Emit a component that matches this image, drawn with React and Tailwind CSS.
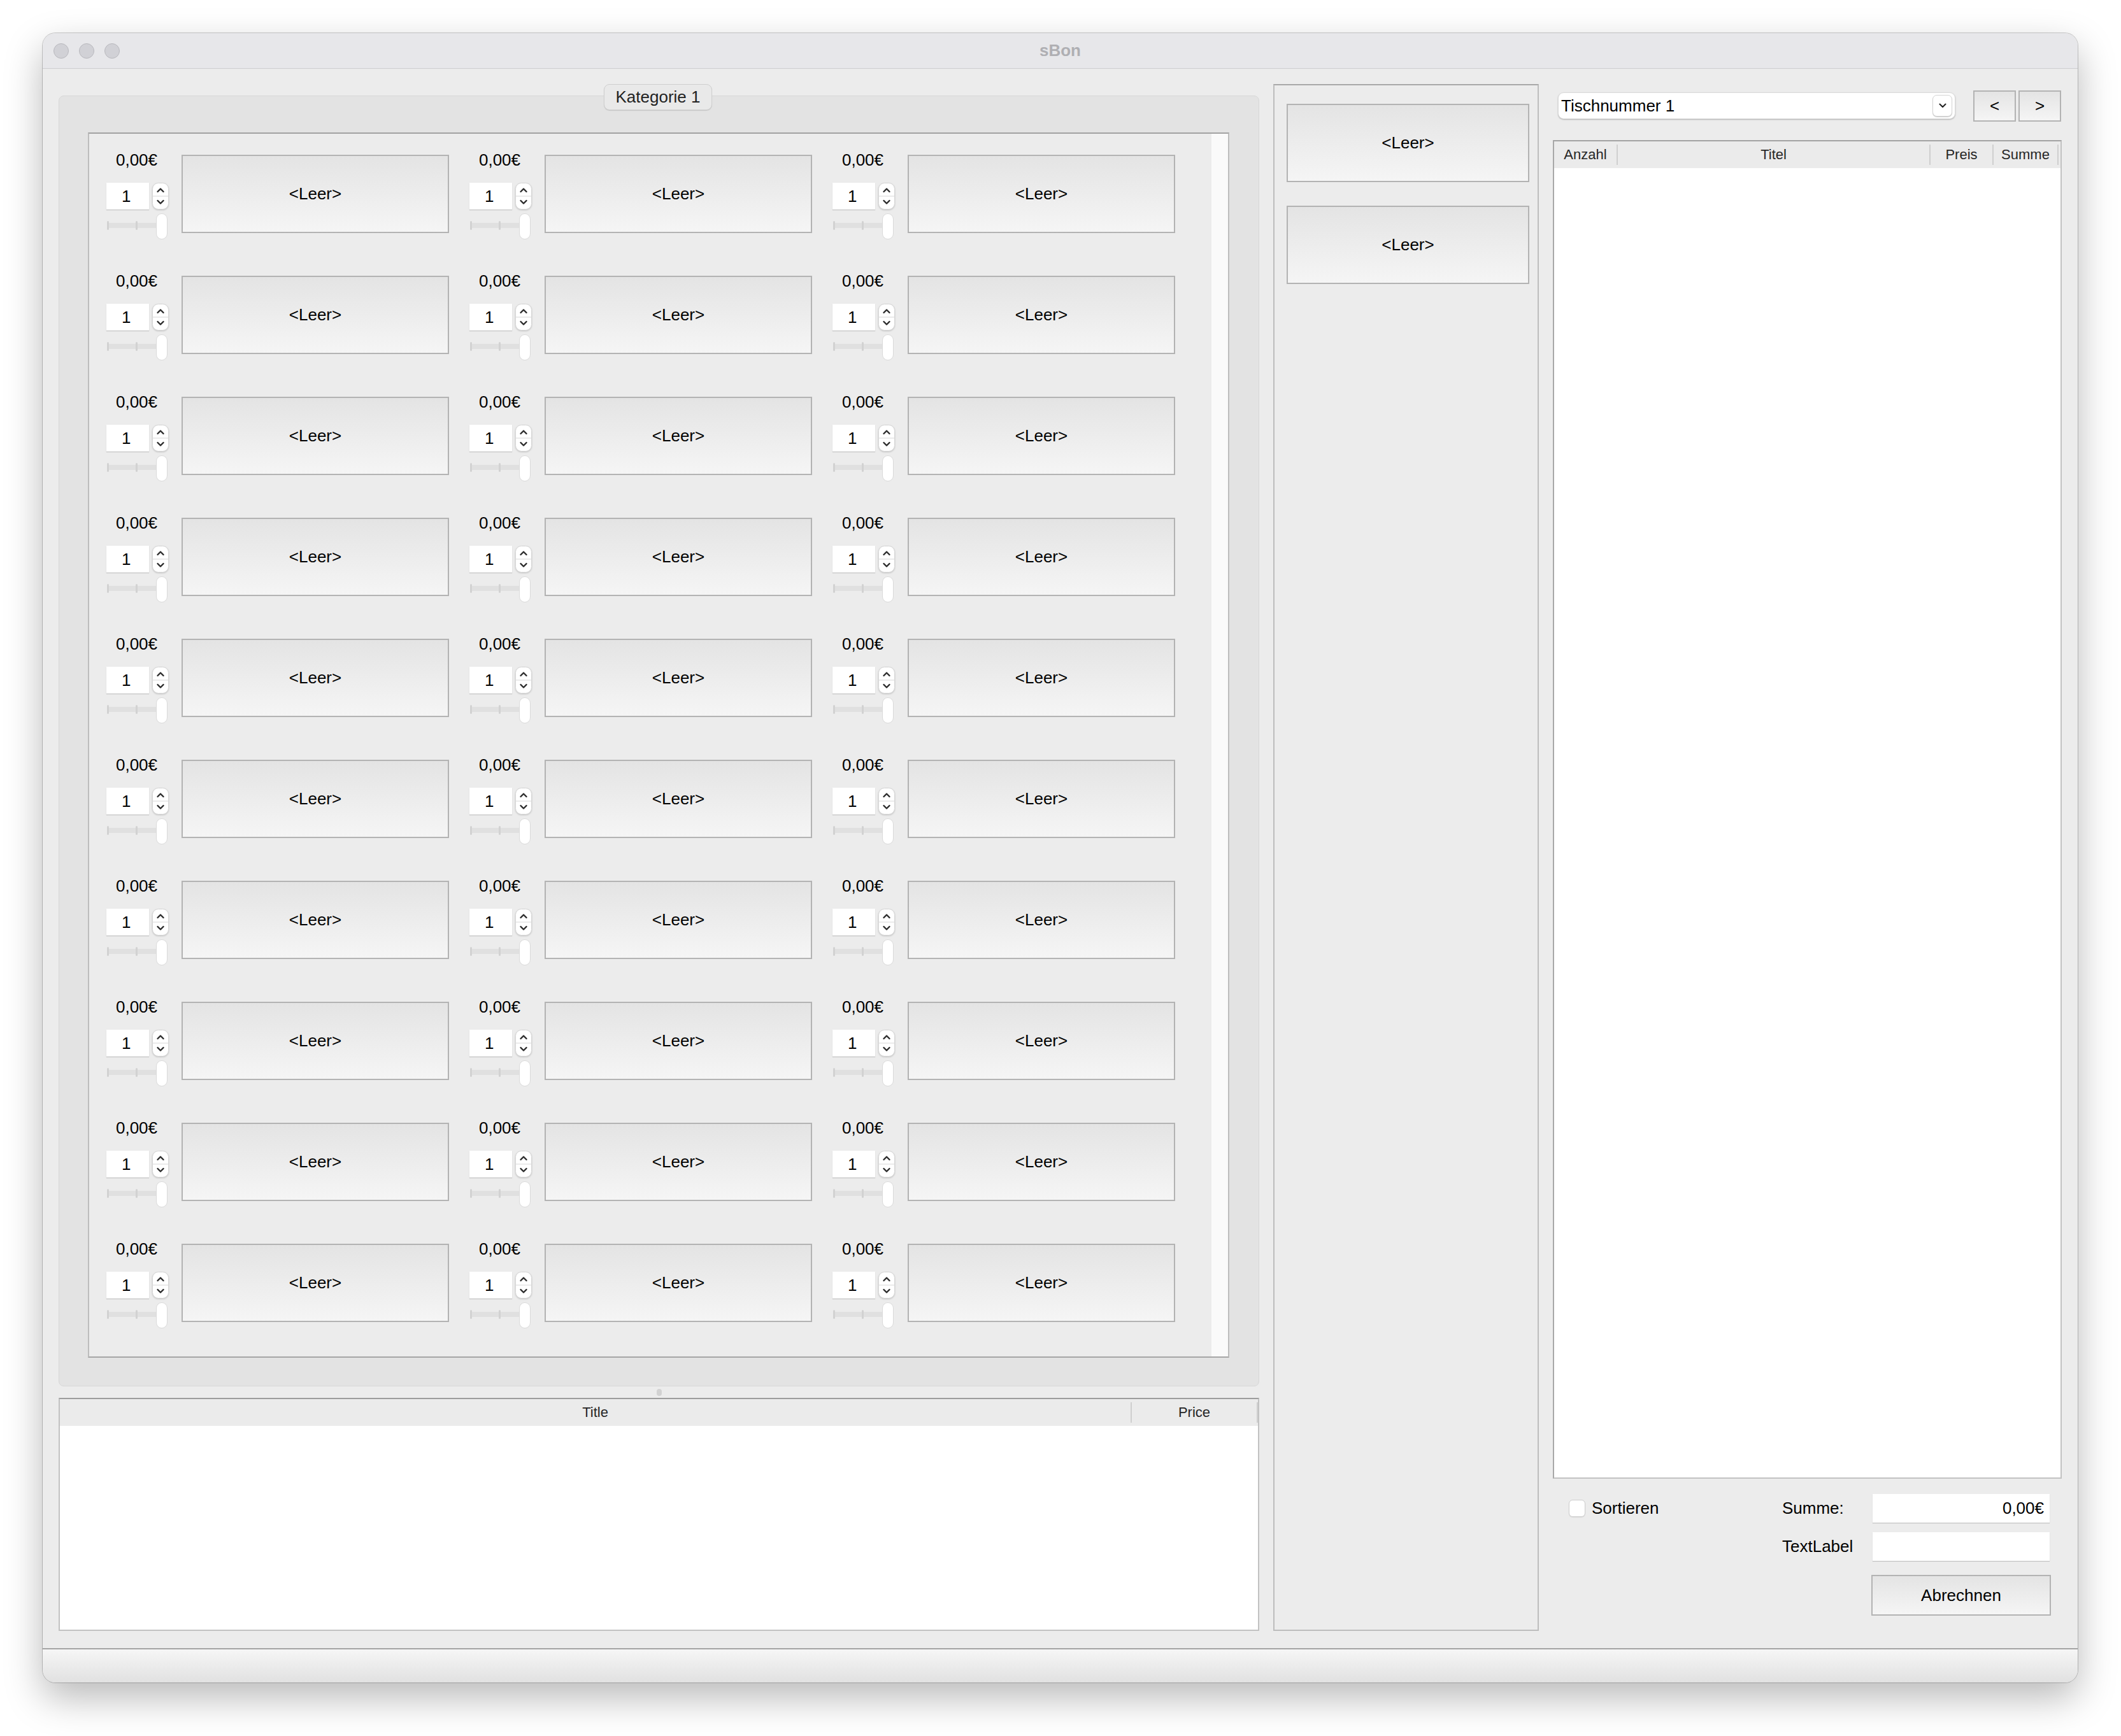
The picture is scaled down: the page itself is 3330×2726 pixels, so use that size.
// sBon main window
const rows = Array.from({ length: 10 })
const cols = Array.from({ length: 3 })

function LeerButton({ className = '', children = '<Leer>' }) {
  return (
    <div className={`flex items-center justify-center border-2 border-[#b3b3b3] bg-linear-to-b from-[#e4e4e4] to-[#f5f5f5] text-[26px] text-black ${className}`}>
      {children}
    </div>
  )
}

function Stepper() {
  return (
    <svg width="26" height="42" viewBox="0 0 26 42" className="drop-shadow-[0_1px_1px_rgba(0,0,0,0.18)]">
      <rect x="0.5" y="0.5" width="25" height="41" rx="9" fill="#fff" stroke="#d6d6d6" />
      <line x1="1" y1="21" x2="25" y2="21" stroke="#e4e4e4" strokeWidth="1.5" />
      <path d="M8.5 14 L13 9.5 L17.5 14" fill="none" stroke="#2a2a2a" strokeWidth="2.4" strokeLinecap="round" strokeLinejoin="round" />
      <path d="M8.5 28 L13 32.5 L17.5 28" fill="none" stroke="#2a2a2a" strokeWidth="2.4" strokeLinecap="round" strokeLinejoin="round" />
    </svg>
  )
}

function Slider() {
  return (
    <svg width="98" height="42" viewBox="0 0 98 42" className="mt-[6px]">
      <rect x="1" y="15" width="84" height="8" rx="4" fill="#e0e0e0" />
      <rect x="1" y="12" width="3" height="14" rx="1.5" fill="#d2d2d2" />
      <rect x="46" y="12" width="3" height="14" rx="1.5" fill="#d2d2d2" />
      <rect x="78.5" y="0.5" width="17" height="40" rx="8.5" fill="#fff" stroke="#dadada" />
    </svg>
  )
}

function Cell() {
  return (
    <div className="flex h-[190px] w-[538px]">
      <div className="flex w-[98px] flex-col">
        <div className="flex h-[40px] items-center justify-center pr-[3px] text-[26px] text-black">0,00€</div>
        <div className="mt-[16px] flex h-[42px] items-center gap-[5px]">
          <div className="h-[42px] w-[67px] bg-white pl-[24px] text-[26px] leading-[42px] text-black shadow-[0_1px_1px_rgba(0,0,0,0.18)]">1</div>
          <Stepper />
        </div>
        <Slider />
      </div>
      <LeerButton className="ml-[20px] mt-[12px] h-[123px] w-[420px]" />
    </div>
  )
}

function HeaderCell({ w, label }) {
  return (
    <div className={`flex h-full items-center justify-center ${w}`}>
      <span className="text-[22px] leading-none text-[#262626]">{label}</span>
    </div>
  )
}

function Divider() {
  return <div className="h-[32px] w-[2px] shrink-0 self-center bg-[#cfcfcf]" />
}

export default function App() {
  return (
    <div className="min-h-[2726px] w-[3330px] bg-white pl-[67px] pt-[52px] font-['Liberation_Sans',Arial,sans-serif]">
      <div className="flex h-[2590px] w-[3195px] flex-col overflow-hidden rounded-[20px] bg-[#ececec] shadow-[0_0_0_1px_rgba(0,0,0,0.2),0_24px_60px_rgba(0,0,0,0.28)]">
        {/* title bar */}
        <div className="grid h-[56px] shrink-0 grid-cols-[1fr_auto_1fr] items-center border-b border-[#cdcdcf] bg-[#e7e7ea]">
          <div className="flex items-center gap-[16px] pl-[17px]">
            <div className="h-[24px] w-[24px] rounded-full border border-[#b8b8bd] bg-[#d1d1d6]" />
            <div className="h-[24px] w-[24px] rounded-full border border-[#b8b8bd] bg-[#d1d1d6]" />
            <div className="h-[24px] w-[24px] rounded-full border border-[#b8b8bd] bg-[#d1d1d6]" />
          </div>
          <div className="text-[26px] font-bold text-[#afafb3]">sBon</div>
          <div />
        </div>

        {/* body */}
        <div className="flex flex-1 gap-[22px] px-[25px] pb-[27px] pt-[24px]">
          {/* left column */}
          <div className="flex w-[1885px] flex-col">
            <div className="relative mt-[18px] h-[2027px] rounded-[8px] border border-[#d7d7d7] bg-[#e3e3e3] pl-[45px] pt-[57px]">
              <div className="absolute left-[855px] top-[-19px] flex h-[41px] w-[170px] items-center justify-center rounded-[9px] border border-[#cfcfcf] bg-[#e9e9e9] text-[26px] text-[#222] shadow-[0_1px_1px_rgba(0,0,0,0.12)]">
                Kategorie 1
              </div>
              <div className="flex h-[1924px] w-[1792px] border-2 border-[#bdbdbd] border-t-[#a2a2a2] border-b-[#a6a6a6] bg-[#ececec]">
                <div className="flex-1 pl-[27px] pt-[21px]">
                  <div className="grid grid-cols-[repeat(3,538px)] gap-x-[32px]">
                    {rows.map((_, r) =>
                      cols.map((_, c) => <Cell key={`${r}-${c}`} />)
                    )}
                  </div>
                </div>
                <div className="w-[26px] bg-[#fafafa]" />
              </div>
            </div>

            <div className="flex h-[18px] items-center justify-center">
              <div className="h-[11px] w-[8px] rounded-full bg-[#d2d2d2]" />
            </div>

            <div className="flex h-[366px] flex-col border-2 border-[#c2c2c2] border-t-[#9c9c9c]">
              <div className="flex h-[42px] shrink-0 bg-[#ebebeb]">
                <HeaderCell w="w-[1681px]" label="Title" />
                <Divider />
                <HeaderCell w="flex-1" label="Price" />
                <Divider />
              </div>
              <div className="flex-1 bg-white" />
            </div>
          </div>

          {/* middle column */}
          <div className="flex w-[417px] flex-col gap-[37px] border-2 border-[#bdbdbd] border-t-[#a8a8a8] pl-[19px] pt-[29px]">
            <LeerButton className="h-[123px] w-[381px]" />
            <LeerButton className="h-[123px] w-[381px]" />
          </div>

          {/* right column */}
          <div className="flex w-[799px] flex-col pt-[9px]">
            <div className="flex h-[50px] items-center">
              <div className="ml-[8px] flex h-[42px] w-[624px] items-center justify-between rounded-[9px] border border-[#dadada] bg-white pl-[4px] pr-[4px] shadow-[0_1px_2px_rgba(0,0,0,0.25)]">
                <span className="text-[26px] text-black">Tischnummer 1</span>
                <div className="flex h-[34px] w-[31px] items-center justify-center rounded-[7px] border border-[#d4d4d4] bg-white shadow-[0_1px_1px_rgba(0,0,0,0.2)]">
                  <svg width="12" height="8" viewBox="0 0 12 8">
                    <path d="M1.5 1.5 L6 6 L10.5 1.5" fill="none" stroke="#222" strokeWidth="2" strokeLinecap="round" strokeLinejoin="round" />
                  </svg>
                </div>
              </div>
              <div className="ml-[28px] flex gap-[4px]">
                <LeerButton className="h-[49px] w-[67px]">&lt;</LeerButton>
                <LeerButton className="h-[49px] w-[67px]">&gt;</LeerButton>
              </div>
            </div>

            <div className="mt-[29px] flex h-[2102px] flex-col border-2 border-[#c2c2c2] border-t-[#a2a2a2] border-l-[#a8a8a8]">
              <div className="flex h-[42px] shrink-0 bg-[#ebebeb]">
                <HeaderCell w="w-[98px]" label="Anzahl" />
                <Divider />
                <HeaderCell w="w-[489px]" label="Titel" />
                <Divider />
                <HeaderCell w="w-[97px]" label="Preis" />
                <Divider />
                <HeaderCell w="w-[100px]" label="Summe" />
                <Divider />
              </div>
              <div className="flex-1 bg-white" />
            </div>

            <div className="mt-[24px] flex h-[45px] items-center">
              <div className="flex w-[360px] items-center pl-[25px]">
                <div className="h-[27px] w-[26px] rounded-[6px] border border-[#cdcdcd] bg-white shadow-[0_1px_1px_rgba(0,0,0,0.08)]" />
                <span className="ml-[10px] text-[26px] text-black">Sortieren</span>
              </div>
              <span className="w-[142px] text-[26px] text-black">Summe:</span>
              <div className="flex h-[45px] w-[278px] items-center justify-end bg-white pr-[9px] text-[26px] text-black shadow-[0_1px_1px_rgba(0,0,0,0.18)]">
                0,00€
              </div>
            </div>

            <div className="mt-[15px] flex h-[45px] items-center">
              <div className="w-[360px]" />
              <span className="w-[142px] text-[26px] text-black">TextLabel</span>
              <div className="h-[45px] w-[278px] bg-white shadow-[0_1px_1px_rgba(0,0,0,0.18)]" />
            </div>

            <div className="mt-[22px] flex justify-end pr-[17px]">
              <LeerButton className="h-[64px] w-[282px]">Abrechnen</LeerButton>
            </div>
          </div>
        </div>

        {/* status bar */}
        <div className="h-[54px] shrink-0 border-t-2 border-[#a4a4a4] bg-linear-to-b from-[#f6f6f6] to-[#e1e1e1]" />
      </div>
    </div>
  )
}
